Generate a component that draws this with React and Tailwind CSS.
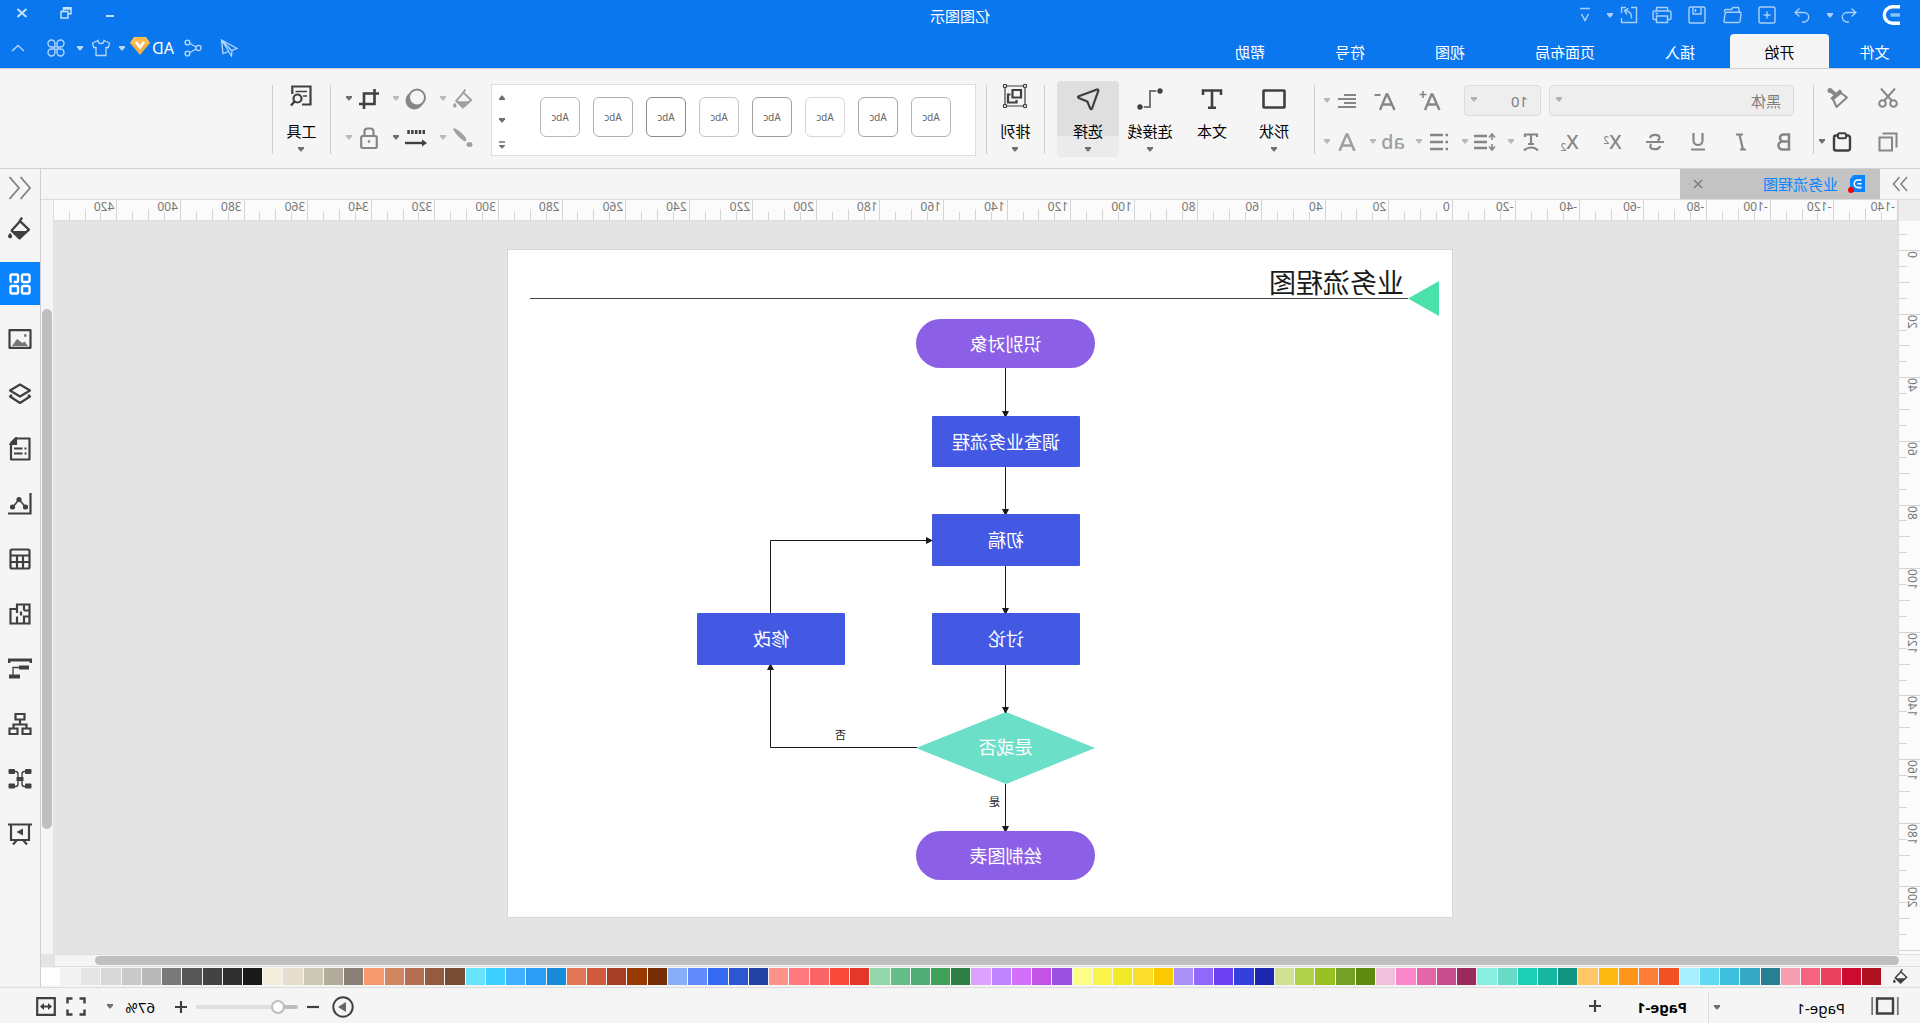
import React from "react";

const PALETTE = [
  "#b0111e", "#cb0b32", "#e8425f", "#f56381", "#f79db0",
  "#267f93", "#38a9c4", "#3fc0df", "#5fdaf1", "#a6f0ff",
  "#f25123", "#ff7e38", "#ff9519", "#ffb913", "#ffc765",
  "#139583", "#17b6a1", "#1bceb4", "#69dcc8", "#87efdd",
  "#9a2b5c", "#c64d8e", "#e367a8", "#fa87c9", "#f0c1da",
  "#5e8a12", "#77a028", "#98c024", "#b2d24c", "#d1e193",
  "#1e27af", "#3440dc", "#6c40f3", "#8f6af8", "#aa91f6",
  "#fbc900", "#fbdd2e", "#f0ea27", "#f9f54a", "#fcfe86",
  "#9a50e0", "#c452e7", "#d46ffb", "#c083ff", "#dca2ff",
  "#2f8044", "#3fa258", "#52ae76", "#65be87", "#92d7ab",
  "#e53729", "#fb4a3b", "#f96466", "#ff7a7d", "#ff9288",
  "#2441a4", "#2d57d2", "#336af1", "#628bfe", "#88aef7",
  "#752e03", "#963a00", "#a53e24", "#d05a3c", "#e27555",
  "#198ad8", "#2d9cf4", "#43b0ff", "#3dd0ff", "#68e3ff",
  "#764c32", "#925b42", "#b27050", "#d38660", "#f6996d",
  "#8a7f75", "#b1ac9c", "#cdc9b8", "#e5ddce", "#f4eddb",
  "#191919", "#2f2f2f", "#434343", "#575757", "#797979",
  "#b9b9b9", "#c9c9c9", "#d8d8d8", "#e5e5e5", "#f2f2f2", "#ffffff",
];

const H_LABELS = Array.from({ length: 29 }, (_, i) => i * 20 - 140);
const V_LABELS = Array.from({ length: 11 }, (_, i) => i * 20);

function Svg({ w = 22, h = w, sw = 2, children, className = "" }) {
  return (
    <svg
      width={w}
      height={h}
      viewBox={`0 0 ${w} ${h}`}
      fill="none"
      stroke="currentColor"
      strokeWidth={sw}
      className={`shrink-0 ${className}`}
      aria-hidden="true"
    >
      {children}
    </svg>
  );
}

function Caret({ className = "" }) {
  return (
    <svg width="8" height="5" viewBox="0 0 8 5" fill="currentColor" className={`shrink-0 ${className}`} aria-hidden="true">
      <path d="M1 0h6v1.5L4.5 4.5h-1L1 1.5z" />
    </svg>
  );
}

function Btn({ label, className = "", children }) {
  return (
    <button type="button" aria-label={label} className={`flex shrink-0 items-center justify-center ${className}`}>
      {children}
    </button>
  );
}

function Split({ label, tone = "text-[#868686]", caret = "text-[#b9b9b9]", children }) {
  return (
    <button type="button" aria-label={label} className={`flex w-9 shrink-0 items-center gap-1 ${tone}`}>
      <span className="flex w-6 items-center justify-center">{children}</span>
      <Caret className={caret} />
    </button>
  );
}

function Rule() {
  return <div className="mt-1 h-[69px] w-px shrink-0 self-start bg-[#cfcfcf]" />;
}

function TitleBar() {
  return (
    <div className="grid h-[34px] grid-cols-[1fr_auto_1fr] pb-1">
      <div className="flex items-center pl-5 text-[#a9d0fb]">
        <svg width="18" height="20" viewBox="0 0 18 20" fill="none" aria-hidden="true">
          <path d="M0 1.800h7.500a8.200 8.200 0 0 1 0 16.400H0" stroke="#fff" strokeWidth="3.400" />
          <path d="M0 10h9.500" stroke="#8fc1f8" strokeWidth="3.400" />
        </svg>
        <Btn label="撤销" className="ml-[17px] w-[31px]">
          <Svg w={16} sw={1.4}>
            <path d="M5.500 1.500L1 5.500l4.500 4M1 5.500h9a4.700 4.700 0 0 1 0 9.500H8" />
          </Svg>
        </Btn>
        <Caret />
        <Btn label="恢复" className="ml-1.5 w-[35px]">
          <Svg w={16} sw={1.4}>
            <path d="M10.500 1.500l4.500 4-4.500 4M15 5.500H6A4.700 4.700 0 0 0 6 15h2" />
          </Svg>
        </Btn>
        <Btn label="新建" className="w-[35px]">
          <Svg w={18} sw={1.4}>
            <rect x="1" y="1" width="16" height="16" rx="1.500" />
            <path d="M9 5.500v7M5.500 9h7" />
          </Svg>
        </Btn>
        <Btn label="打开" className="w-[35px]">
          <Svg w={20} h={18} sw={1.4}>
            <path d="M2.500 6.500l1-5h5.500l1.500 2h5.500q1.500 0 1.500 1.500v1.500M1 7q0-.8 1-.8h13q1.500 0 1.800 1.500l1.200 7q.2 1.800-1.500 1.800H3.500q-1.500 0-1.700-1.500z" />
          </Svg>
        </Btn>
        <Btn label="保存" className="w-[35px]">
          <Svg w={18} sw={1.4}>
            <rect x="1" y="1" width="16" height="16" rx="1.500" />
            <path d="M5 1v7h8V1M10.500 3v3" />
          </Svg>
        </Btn>
        <Btn label="打印" className="w-[35px]">
          <Svg w={20} h={18} sw={1.4}>
            <path d="M4.500 5V1.500h11V5M4.500 13.500H2.500q-1.500 0-1.500-1.500V6.500q0-1.500 1.500-1.500h15q1.500 0 1.500 1.500V12q0 1.500-1.500 1.500h-2M4.500 10h11v6.500h-11z" />
            <path d="M14 7.500h2.500" />
          </Svg>
        </Btn>
        <Btn label="导出" className="w-[31px]">
          <Svg w={18} sw={1.4}>
            <path d="M7 1.500H1.500v15h15V12M16.500 7V1.500H12M6.500 12.500C6 8 8 5 13 4.500M9.500 2.500l4 2-2.500 4" />
          </Svg>
        </Btn>
        <Caret />
        <Btn label="自定义快速访问" className="ml-[13px] w-4">
          <Svg w={12} h={16} sw={1.5}>
            <path d="M1 1.500h10M2.500 7L6 13.500 9.500 7" />
          </Svg>
        </Btn>
      </div>
      <h1 className="flex items-center pt-0.5 text-[15px] leading-5 text-white">亿图图示</h1>
      <div className="flex justify-end pb-1 text-[#c7e0fc]">
        <Btn label="最小化" className="w-11">
          <Svg w={12} sw={2}><path d="M2 9h8" /></Svg>
        </Btn>
        <Btn label="还原" className="w-11">
          <Svg w={12} sw={1.5}><path d="M1 .8h7.500v6H1zM1 2h7.500" /><path d="M4 4.500h7v6.500H4z" fill="#0a77ee" /></Svg>
        </Btn>
        <Btn label="关闭" className="w-11">
          <Svg w={12} sw={2}><path d="M1.500 2l9 8M10.500 2l-9 8" /></Svg>
        </Btn>
      </div>
    </div>
  );
}

const TABS = ["插入", "页面布局", "视图", "符号", "帮助"];

function TabBar() {
  return (
    <div className="flex h-[34px] items-stretch justify-between text-[15px] leading-5 text-white">
      <nav className="flex" aria-label="功能区">
        <button type="button" className="w-[91px] pt-0.5">文件</button>
        <button type="button" className="w-[99px] rounded-t-sm bg-[#f5f5f5] pt-0.5 text-black">开始</button>
        {TABS.map((t) => (
          <button type="button" key={t} className="px-[35px] pt-0.5">{t}</button>
        ))}
      </nav>
      <div className="flex items-center pb-1.5 text-[#b5d6fb]">
        <Btn label="发送" className="w-9">
          <Svg w={18} sw={1.3}>
            <path d="M16.500 1L1 9.500l5 2 .5 5.500 3-4.500 5.500 2zM16.500 1L6.500 11.500M16.500 1L9 12.500" />
          </Svg>
        </Btn>
        <Btn label="分享" className="w-9">
          <Svg w={18} sw={1.4}>
            <circle cx="3.500" cy="9" r="2.600" /><circle cx="14.500" cy="3.500" r="2.400" /><circle cx="14.500" cy="14.500" r="2.400" />
            <path d="M6 8l6-3.500M6 10l6 3.500" />
          </Svg>
        </Btn>
        <button type="button" className="ml-px flex items-center gap-0.5 text-base leading-5 text-white">
          AD
          <svg width="20" height="18" viewBox="0 0 20 18" aria-hidden="true" className="mb-1">
            <path d="M4 0h12l4 6-10 12L0 6z" fill="#f3b043" />
            <path d="M4 0h12l4 6-10 2L0 6z" fill="#fdc052" opacity=".7" />
            <path d="M6 5l4 5.500L14 5" fill="none" stroke="#fff" strokeWidth="2.600" />
          </svg>
        </button>
        <Caret className="ml-1" />
        <Btn label="皮肤" className="w-[34px]">
          <Svg w={20} h={18} sw={1.3}>
            <path d="M7 1.500L1.500 4l1.200 4.500H5V16.500h10V8.500h2.300L18.500 4 13 1.500a3 3 0 0 1-6 0z" />
          </Svg>
        </Btn>
        <Caret />
        <Btn label="更多" className="w-10">
          <Svg w={18} sw={1.4}>
            <path d="M8 4.500V8H4.500A3.500 3.500 0 1 1 8 4.500zM10 4.500V8h3.500A3.500 3.500 0 1 0 10 4.500zM8 13.500V10H4.500A3.500 3.500 0 1 0 8 13.500zM10 13.500V10h3.500a3.500 3.500 0 1 1-3.500 3.500z" />
          </Svg>
        </Btn>
        <Btn label="收起" className="w-9">
          <Svg w={14} h={8} sw={1.4}><path d="M1 7l6-5.500L13 7" /></Svg>
        </Btn>
      </div>
    </div>
  );
}

function Bucket({ w = 22 }) {
  return (
    <svg width={w} height={w} viewBox="0 0 22 22" fill="none" stroke="currentColor" strokeWidth="2.200" aria-hidden="true" className="shrink-0">
      <path d="M8.500 0.500l3 4.500M10.500 4l8 9-7.500 7.500L2 12z" strokeLinejoin="round" />
      <path d="M2.500 13.500h16L11 21z" fill="currentColor" stroke="none" />
      <path d="M20 15c1.300 1.700 2 2.500 2 3.500a2 2 0 0 1-4 0c0-1 .7-1.800 2-3.500z" fill="currentColor" stroke="none" />
    </svg>
  );
}

function Select({ label, value, className }) {
  return (
    <div className={`relative flex h-[31px] shrink-0 text-[#7f7f7f] ${className}`}>
      <select aria-label={label} className="w-full appearance-none rounded-sm border border-[#dcdcdc] bg-[#eee] pl-3 text-[15px] leading-6">
        <option>{value}</option>
      </select>
      <Caret className="pointer-events-none absolute top-3 right-1.5 text-[#b0b0b0]" />
    </div>
  );
}

function BigBtn({ label, caret = true, active = false, iconAlign = "items-center", className = "w-[62px]", children }) {
  return (
    <button
      type="button"
      className={`flex h-[76px] shrink-0 flex-col items-center text-[15px] leading-5 text-black ${className} ${
        active ? "rounded-sm bg-linear-to-b from-[#dfdfdf] from-72% to-[#ebebeb] to-72%" : ""
      }`}
    >
      <span className={`flex h-9 text-[#404040] ${iconAlign}`}>{children}</span>
      <span className="mt-1">{label}</span>
      {caret && <Caret className="mt-1.5 text-[#707070]" />}
    </button>
  );
}

const STYLE_BORDERS = [
  "border-[#b4b4b4]", "border-[#a8a8a8]", "border-[#d6d6d6]", "border-[#a0a0a0]",
  "border-[#c4c4c4]", "border-[#8c8c8c]", "border-[#b0b0b0]", "border-[#b8b8b8]",
];

function Ribbon() {
  return (
    <div className="flex h-[101px] items-start border-t border-b border-[#d2d2d2] bg-[#f5f5f5] pt-3 text-[#868686]">
      <div className="ml-[17px] flex w-[89px] shrink-0 flex-col gap-[11px] pt-1">
        <div className="flex h-[31px] items-center gap-5 pb-1.5">
          <Btn label="剪切" className="w-[30px]">
            <Svg w={20} h={20} sw={2}>
              <circle cx="4.500" cy="15.500" r="3.300" /><circle cx="15.500" cy="15.500" r="3.300" />
              <path d="M3 0.500L14 13M17 .5L6 13" />
            </Svg>
          </Btn>
          <Btn label="格式刷" className="w-[30px]">
            <Svg w={22} sw={2}>
              <circle cx="19" cy="3.500" r="2.500" fill="currentColor" stroke="none" />
              <path d="M18 4l-4 3" strokeWidth="4" />
              <path d="M8 3.500l9.500 9" strokeWidth="3.600" />
              <path d="M8 6L2 10.500l10.500 9.500L16 12z" strokeLinejoin="round" />
            </Svg>
          </Btn>
        </div>
        <div className="flex h-[31px] items-center pb-0.5">
          <Btn label="复制" className="w-[30px]">
            <Svg w={20}>
              <path d="M6 5.500h12.500v13H6zM1.500 15.500v-14H15.500" />
            </Svg>
          </Btn>
          <Btn label="粘贴" className="ml-4 w-[30px] text-[#404040]">
            <Svg w={20} sw={2.4}>
              <rect x="2" y="3.500" width="16" height="15" rx="2" />
              <rect x="6" y="1.200" width="8" height="5" rx="1.500" fill="#f5f5f5" strokeWidth="2" />
            </Svg>
          </Btn>
          <Caret className="ml-px text-[#707070]" />
        </div>
      </div>
      <Rule />
      <div className="flex w-[498px] shrink-0 flex-col gap-[10px] pt-1">
        <div className="flex h-[31px] items-center pl-[19px]">
          <Select label="字体" value="黑体" className="w-[245px]" />
          <Select label="字号" value="10" className="ml-2 w-[77px]" />
          <Btn label="增大字号" className="ml-[11px] w-[45px]">
            <Svg w={22} h={20} sw={2.4}>
              <path d="M1.500 19L8.500 3.500h1L16 19M4 13.500h10" /><path d="M18 0v7M14.500 3.500h7" strokeWidth="1.600" />
            </Svg>
          </Btn>
          <Btn label="减小字号" className="w-[45px]">
            <Svg w={22} h={20} sw={2.4}>
              <path d="M1.500 19L8.500 3.500h1L16 19M4 13.500h10" /><path d="M15.500 4h6" strokeWidth="2" />
            </Svg>
          </Btn>
          <span className="ml-1">
            <Split label="对齐">
              <Svg w={18} h={16} sw={2.2}>
                <path d="M0 2h12M0 6h18M0 10h12M0 14h18" />
              </Svg>
            </Split>
          </span>
        </div>
        <div className="flex h-[31px] items-center pl-[7px]">
          <Btn label="粗体" className="w-[43px]">
            <Svg w={14} h={18} sw={2.6}>
              <path d="M2 1.500h5.500a3.500 3.500 0 0 1 0 7H2zM2 8.500h6.500a4 4 0 0 1 0 8H2z" />
            </Svg>
          </Btn>
          <Btn label="斜体" className="w-[43px]">
            <Svg w={14} h={18} sw={2.2}><path d="M5 1.500h7M2 16.500h6M8.500 1.500L5 16.500" /></Svg>
          </Btn>
          <Btn label="下划线" className="w-[43px]">
            <Svg w={16} h={18} sw={2.2}><path d="M3.500 0v7.500a4.500 4.500 0 0 0 9 0V0M1 16.500h14" /></Svg>
          </Btn>
          <Btn label="删除线" className="w-[43px]">
            <Svg w={18} h={18} sw={2.2}>
              <path d="M14 5c-.5-2-2.500-3.200-5-3.200S4.500 3 4.500 5c0 1.200.8 2 2 2.500M0 9h18M12.500 11.200c.8.500 1.200 1.200 1.200 2 0 2-2 3-4.700 3S4.300 15 4 13" />
            </Svg>
          </Btn>
          <Btn label="上标" className="w-[43px] font-medium">
            <span className="text-[20px] leading-5">X<sup className="text-[10px]">2</sup></span>
          </Btn>
          <Btn label="下标" className="w-[43px] font-medium">
            <span className="text-[20px] leading-5">X<sub className="text-[10px]">2</sub></span>
          </Btn>
          <div className="ml-[5px] flex gap-[10px]">
            <Split label="文字方向">
              <Svg w={18} h={18} sw={2.2}>
                <path d="M3 4V1.500h12V4M9 1.500V11M6 11h6M2 17.500c3.500-4 10.500-4 14 0" />
              </Svg>
            </Split>
            <Split label="行距">
              <Svg w={22} h={18} sw={2}>
                <path d="M9 3h13M9 9h13M9 15h13" strokeWidth="2.400" /><path d="M4 1v6M4 11v6M1 4.500L4 1l3 3.500M1 13.500L4 17l3-3.500" strokeWidth="1.600" />
              </Svg>
            </Split>
            <Split label="项目符号">
              <Svg w={18} h={18} sw={2.4}><path d="M0 2h2.500M0 9h2.500M0 16h2.500M5 2h13M5 9h13M5 16h13" /></Svg>
            </Split>
            <Split label="突出显示" tone="text-[#a0a0a0]">
              <span className="text-[20px] leading-5 font-medium">ab</span>
            </Split>
            <Split label="字体颜色" tone="text-[#a0a0a0]">
              <Svg w={18} h={18} sw={2.6}><path d="M1.500 18L8.500 1.500h1L16.500 18M4 12.500h10" /></Svg>
            </Split>
          </div>
        </div>
      </div>
      <Rule />
      <div className="flex shrink-0 pr-3 pl-[9px]">
        <BigBtn label="形状">
          <Svg w={24} h={20} sw={2.6}><rect x="1.500" y="1.500" width="21" height="17" rx="0.500" /></Svg>
        </BigBtn>
        <BigBtn label="文本" caret={false}>
          <Svg w={22} h={20} sw={2.6}><path d="M2 6V1.500h18V6M11 1.500V19M7 18.800h8" /></Svg>
        </BigBtn>
        <BigBtn label="连接线">
          <Svg w={26} h={22} sw={2}>
            <path d="M3 3h10V19H23" stroke="#777" />
            <circle cx="3" cy="3" r="2.700" fill="currentColor" stroke="none" />
            <circle cx="23" cy="19" r="2.700" fill="currentColor" stroke="none" />
            <path d="M6.200 1v4M19.800 17v4" stroke="#f5f5f5" strokeWidth="1" />
          </Svg>
        </BigBtn>
        <BigBtn label="选择" active>
          <Svg w={24} h={24} sw={2.2}>
            <path d="M3 2.500c-.9-.3-1.600.4-1.300 1.300L8 21.500c.4 1 1.300 1 1.700.1l3-7.100 8.600-3.600c1-.4.900-1.200 0-1.600z" strokeLinejoin="round" />
          </Svg>
        </BigBtn>
      </div>
      <Rule />
      <BigBtn label="排列" className="w-[57px]" iconAlign="items-start pt-0.5">
        <Svg w={26} h={26} sw={2.2}>
          <path d="M3 3h20v20H3z" strokeWidth="1.200" />
          <path d="M7 7h8.500v7.500H7z" /><path d="M17.500 11.500H20v8h-8.500V17" />
          <g fill="#f5f5f5" strokeWidth="1.200">
            <circle cx="3" cy="3" r="1.700" /><circle cx="23" cy="3" r="1.700" /><circle cx="3" cy="23" r="1.700" /><circle cx="23" cy="23" r="1.700" />
          </g>
        </Svg>
      </BigBtn>
      <Rule />
      <div className="mt-[3px] ml-[10px] flex h-[72px] w-[485px] shrink-0 justify-between border border-[#dedede] bg-white pl-6">
        <div className="flex gap-[13px] pt-3">
          {STYLE_BORDERS.map((b, i) => (
            <button type="button" key={i} className={`size-10 rounded-md border bg-white text-[10px] leading-4 text-[#666] ${b}`}>
              Abc
            </button>
          ))}
        </div>
        <div className="flex w-[21px] flex-col items-center justify-between pt-2.5 pb-1.5 text-[#707070]">
          <Btn label="上一行"><Caret className="rotate-180" /></Btn>
          <Btn label="下一行"><Caret /></Btn>
          <Btn label="展开"><Svg w={8} h={8} sw={1.5}><path d="M1 1h6" /><path d="M1 4h6v.5L4.500 7.500h-1L1 4.500z" fill="currentColor" stroke="none" /></Svg></Btn>
        </div>
      </div>
      <div className="ml-4 flex shrink-0 flex-col gap-[9px] pt-0.5 pr-[14px]">
        <div className="flex h-[31px] items-center gap-[11px]">
          <Split label="填充" tone="text-[#a0a0a0]"><Bucket w={20} /></Split>
          <Split label="阴影">
            <Svg w={22} sw={2}>
              <circle cx="12.500" cy="12.500" r="9" fill="currentColor" stroke="none" />
              <circle cx="10" cy="9.500" r="8" fill="#f5f5f5" />
            </Svg>
          </Split>
          <Split label="裁剪" tone="text-[#404040]" caret="text-[#707070]">
            <Svg w={20} sw={2.6}><path d="M4.500 0v15H20M0 4.500h15V20" /></Svg>
          </Split>
        </div>
        <div className="flex h-[31px] items-center gap-[11px] pb-0.5">
          <Split label="线条" tone="text-[#a0a0a0]">
            <Svg w={20} sw={1}>
              <path d="M19.500.5c1 1-1.500 4.500-4.500 7.500s-6.500 6-7.800 5.200S7 9.500 10 6.500 18.500-.5 19.500.5z" fill="currentColor" stroke="none" />
              <ellipse cx="3.500" cy="16.500" rx="3" ry="2.500" fill="currentColor" stroke="none" />
            </Svg>
          </Split>
          <Split label="线型" tone="text-[#404040]" caret="text-[#707070]">
            <Svg w={22} h={18}><path d="M2 3h18" strokeWidth="4" strokeDasharray="2.500 1.300" /><path d="M5 14h17" strokeWidth="2.400" /><path d="M5 10.500v7L0 14z" fill="currentColor" stroke="none" /></Svg>
          </Split>
          <Split label="锁定">
            <Svg w={18} h={22} sw={2.2}>
              <rect x="1.200" y="9" width="15.600" height="12" rx="1.500" /><path d="M4.500 9V4.500a3 3 0 0 1 3-3h3a3 3 0 0 1 3 3V9" /><circle cx="9" cy="14.500" r="1.300" fill="currentColor" stroke="none" />
            </Svg>
          </Split>
        </div>
      </div>
      <Rule />
      <BigBtn label="工具" className="w-[57px]" iconAlign="items-start pt-1">
        <Svg w={22} h={22} sw={2.4}>
          <path d="M10 19.500H1.500v-18h18.200V9" strokeWidth="2.200" /><path d="M5 6.500h11.500M5 11h4" strokeWidth="1.600" />
          <circle cx="14.500" cy="13.500" r="4" strokeWidth="2.200" /><path d="M17.500 16.500l3.500 4" />
        </Svg>
      </BigBtn>
      <Rule />
    </div>
  );
}

function DocTabs() {
  return (
    <div className="flex h-[31px] items-stretch border-b border-[#dcdcdc] bg-[#f5f5f5]">
      <Btn label="展开符号库" className="w-10 text-[#808080]">
        <Svg w={16} h={16} sw={1.5}><path d="M1 1l6 7-6 7M8.500 1l6 7-6 7" /></Svg>
      </Btn>
      <div className="flex w-[200px] items-center bg-[#c3c3c3] pl-[14px]">
        <svg width="20" height="18" viewBox="0 0 20 18" aria-hidden="true">
          <path d="M1 0h11.500L16 4v13H1z" fill="#0a84ff" />
          <path d="M4.500 5H8a3.800 3.800 0 0 1 0 7.600H4.500M4.500 8.800H8.500" fill="none" stroke="#fff" strokeWidth="1.600" />
          <circle cx="15" cy="15" r="3" fill="#f00" />
        </svg>
        <span className="ml-2 grow text-[15px] leading-5 text-[#0a84ff]">业务流程图</span>
        <Btn label="关闭标签" className="w-9 text-[#777]">
          <Svg w={10} h={10} sw={1.4}><path d="M1 1l8 8M9 1L1 9" /></Svg>
        </Btn>
      </div>
    </div>
  );
}

function HRuler() {
  return (
    <div className="flex h-[21px] pr-3">
      <div className="w-[22px] shrink-0 border-r border-[#dcdcdc] bg-[#ededed]" />
      <div className="flex min-w-0 grow border-r border-b border-[#dcdcdc] bg-[#fbfbfb] text-xs leading-[14px] text-[#777]">
        {H_LABELS.map((n) => (
          <div key={n} className="relative flex min-w-0 flex-1 items-end border-l border-[#d4d4d4]">
            <span className="absolute top-0 left-0.5">{n}</span>
            <i className="flex-1" />
            <i className="h-[8px] flex-1 border-l border-[#d4d4d4]" />
            <i className="h-[11px] flex-1 border-l border-[#d4d4d4]" />
            <i className="h-[8px] flex-1 border-l border-[#d4d4d4]" />
          </div>
        ))}
      </div>
    </div>
  );
}

function VRuler() {
  return (
    <div className="flex w-[22px] shrink-0 flex-col border-r border-[#dcdcdc] bg-[#fbfbfb] text-xs leading-4 text-[#777]">
      <div className="flex h-[29px] flex-col items-end pt-[13px]">
        <i className="w-[8px] border-t border-[#d4d4d4]" />
      </div>
      {V_LABELS.map((n) => (
        <div key={n} className="relative flex flex-1 flex-col items-end border-t border-[#d4d4d4]">
          <span className="absolute top-0 left-0 rotate-180 [writing-mode:vertical-rl]">{n}</span>
          <i className="flex-1" />
          <i className="w-[8px] flex-1 border-t border-[#d4d4d4]" />
          <i className="w-[11px] flex-1 border-t border-[#d4d4d4]" />
          <i className="w-[8px] flex-1 border-t border-[#d4d4d4]" />
        </div>
      ))}
      <div className="h-[4px] border-t border-[#d4d4d4]" />
    </div>
  );
}

function Node({ className, children }) {
  return (
    <div className={`absolute flex items-center justify-center text-[18px] leading-6 text-white ${className}`}>{children}</div>
  );
}

function Drawing() {
  return (
    <div className="relative mt-[28px] ml-[445px] h-[669px] w-[946px] border border-[#d6d6d6] bg-white">
      <svg className="absolute inset-0" width="944" height="667" viewBox="0 0 944 667" fill="none" aria-hidden="true">
        <path d="M13 31v35l31-17.500z" fill="#4be1ab" />
        <path d="M44 48.500h878" stroke="#444" />
        <path d="M446 534l90-36-90-36-89 36z" fill="#6bdfc7" />
        <g stroke="#1a1a1a">
          <path d="M446.500 118v48M446.500 217v47M446.500 316v47M446.500 415v47M446.500 534v47" />
          <path d="M535 497.500h146.500V416M681.500 363v-72.500H521" />
        </g>
        <g fill="#1a1a1a">
          <path d="M443 161h7l-3 6h-1zM443 259h7l-3 6h-1zM443 358h7l-3 6h-1zM443 457h7l-3 6h-1zM443 576h7l-3 6h-1z" />
          <path d="M678 420h7l-3-6h-1zM526 287v7l-6-3v-1z" />
        </g>
      </svg>
      <h2 className="absolute top-[15px] left-12 text-[27px] leading-9 text-[#1a1a1a]">业务流程图</h2>
      <Node className="top-[69px] left-[357px] h-[49px] w-[179px] rounded-full bg-[#8c60e6]">识别对象</Node>
      <Node className="top-[166px] left-[372px] h-[51px] w-[148px] rounded-[1px] bg-[#4359e4]">调查业务流程</Node>
      <Node className="top-[264px] left-[372px] h-[52px] w-[148px] rounded-[1px] bg-[#4359e4]">初稿</Node>
      <Node className="top-[363px] left-[372px] h-[52px] w-[148px] rounded-[1px] bg-[#4359e4]">讨论</Node>
      <Node className="top-[363px] left-[607px] h-[52px] w-[148px] rounded-[1px] bg-[#4359e4]">修改</Node>
      <Node className="top-[461px] left-[357px] h-[72px] w-[179px]">是或否</Node>
      <Node className="top-[581px] left-[357px] h-[49px] w-[179px] rounded-full bg-[#8c60e6]">绘制图表</Node>
      <span className="absolute top-[477px] left-[606px] text-[11px] leading-4 text-[#1a1a1a]">否</span>
      <span className="absolute top-[544px] left-[452px] text-[11px] leading-4 text-[#1a1a1a]">是</span>
    </div>
  );
}

const TOOLS = [
  ["填充", <Bucket key="i" w={23} />],
  ["符号库", (
    <Svg key="i" w={22} sw={2.4}>
      <rect x="1.500" y="1.500" width="7.500" height="7.500" rx="1.500" /><rect x="13" y="1.500" width="7.500" height="7.500" rx="1.500" strokeDasharray="13 2" />
      <rect x="1.500" y="13" width="7.500" height="7.500" rx="1.500" /><rect x="13" y="13" width="7.500" height="7.500" rx="1.500" />
    </Svg>
  )],
  ["图片", (
    <Svg key="i" w={24} h={20} sw={2.2}>
      <path d="M1.500 1.200h21v17.600h-21z" strokeLinejoin="round" /><path d="M4 17l3.500-4.500 2 1.500L15 10l5 7z" fill="#777" stroke="none" /><path d="M5.500 6.500H8" strokeWidth="2.500" stroke="#777" />
    </Svg>
  )],
  ["图层", (
    <Svg key="i" w={24} h={22} sw={2.2}>
      <path d="M12 1.500l10 6-10 6-10-6z" strokeLinejoin="round" /><path d="M4 12l-2 1.500 10 6.500 10-6.500-2-1.500" strokeLinejoin="round" />
    </Svg>
  )],
  ["注释", (
    <Svg key="i" w={22} h={24} sw={2.2}>
      <path d="M1.500 1.500h14l4.500 4.500V22.500h-18.500z" strokeLinejoin="round" /><path d="M15 1.500V7h5z" fill="currentColor" />
      <path d="M4.500 11.500h2M8.500 11.500H17M4.500 16.500h2M8.500 16.500H17" strokeWidth="2" />
    </Svg>
  )],
  ["图表", (
    <Svg key="i" w={24} h={22} sw={2.2}>
      <path d="M1.500 0v20.500H24" /><path d="M6 14.500l7-8 6.500 8" strokeWidth="1.500" />
      <g fill="currentColor" stroke="none"><circle cx="6.500" cy="14" r="2.600" /><circle cx="13" cy="6.500" r="2.600" /><circle cx="19.500" cy="14" r="2.600" /></g>
    </Svg>
  )],
  ["表格", (
    <Svg key="i" w={22} h={22} sw={2.2}>
      <rect x="1.500" y="1.500" width="19" height="19" rx="1.500" /><path d="M1.500 7.500h19M1.500 14h19M8 7.500v13M14 7.500v13" />
    </Svg>
  )],
  ["平面图", (
    <Svg key="i" w={22} h={22} sw={2.2}>
      <path d="M1.500 1.500H14v4.500h6.500v14.500h-19zM1.500 7.500h5.500M7 1.500v6M1.500 13.500H7v7M14 6v4M14 13.500v7M10 8.500v4" />
    </Svg>
  )],
  ["甘特图", (
    <Svg key="i" w={24} h={22}>
      <path d="M1 5V2h22v3" strokeWidth="2.800" /><path d="M3 9.500h10M12 18.500h11" strokeWidth="3.800" /><path d="M13 9.500h6v9" strokeWidth="1.300" />
    </Svg>
  )],
  ["组织架构图", (
    <Svg key="i" w={24} h={24} sw={2.2}>
      <path d="M7.500 2h9v5.500h-9zM1.500 16.500h8v5.500h-8zM14.500 16.500h8v5.500h-8zM12 7.500V12M5.500 15.500V12.500h13v3" />
    </Svg>
  )],
  ["思维导图", (
    <Svg key="i" w={24} h={20} sw={1.4}>
      <path d="M6 2.500h1.500q2.500 0 2.500 2.500v10q0 2.500-2.500 2.500H6M18 2.500h-1.500Q14 2.500 14 5v10q0 2.500 2.500 2.500H18" />
      <g fill="currentColor" stroke="none"><rect x="0.500" y="0" width="6.500" height="5" rx="1" /><rect x="17" y="0" width="6.500" height="5" rx="1" /><rect x="0.500" y="14.500" width="6.500" height="5" rx="1" /><rect x="17" y="14.500" width="6.500" height="5" rx="1" /><rect x="8.500" y="8" width="7" height="4" /></g>
    </Svg>
  )],
  ["演示", (
    <Svg key="i" w={24} h={22} sw={2.2}>
      <path d="M0 1.500h24M3 1.500v15.500h18V1.500M9 17l-4 4.500M15 17l4 4.500" /><path d="M9 5.500v7l6.500-3.500z" fill="currentColor" stroke="none" />
    </Svg>
  )],
];

function Sidebar() {
  return (
    <aside className="flex w-[41px] shrink-0 flex-col border-l border-[#cfcfcf] bg-[#f5f5f5] text-[#404040]">
      <Btn label="展开面板" className="h-[38px] w-10 text-[#808080]">
        <Svg w={24} h={24} sw={1.8}><path d="M11.500 1L2 12l9.500 11M22.500 1L13 12l9.500 11" /></Svg>
      </Btn>
      <div className="flex flex-col gap-3">
        {TOOLS.map(([name, icon], i) => (
          <Btn key={name} label={name} className={i === 1 ? "h-[43px] w-10 bg-[#0a84ff] text-white" : "h-[43px] w-10"}>
            {icon}
          </Btn>
        ))}
      </div>
    </aside>
  );
}

function Palette() {
  return (
    <div className="flex h-5 items-center pt-px pb-0.5">
      <span className="flex w-[39px] shrink-0 justify-center text-[#404040]"><Bucket w={15} /></span>
      <div className="flex h-[17px] grow gap-px">
        {PALETTE.map((c) => (
          <button type="button" key={c} aria-label={c} className="min-w-0 flex-1" style={{ backgroundColor: c }} />
        ))}
      </div>
    </div>
  );
}

function StatusBar() {
  return (
    <footer className="flex h-9 items-center justify-between border-t border-[#dcdcdc] bg-[#f5f5f5] text-[#404040]">
      <div className="flex items-center self-stretch text-[15px] leading-5 text-black">
        <Btn label="页面视图" className="ml-[21px] w-7 text-[#404040]">
          <Svg w={28} h={18}><path d="M6 1.500h16v15H6z" strokeWidth="2.400" /><path d="M1.200 0v18M26.800 0v18" stroke="#777" strokeWidth="1.800" /></Svg>
        </Btn>
        <button type="button" className="ml-[26px] flex w-[136px] items-center justify-between pt-1">
          Page-1
          <Caret className="mr-1 text-[#707070]" />
        </button>
        <div className="h-[30px] w-px self-end bg-[#dcdcdc]" />
        <button type="button" className="ml-[21px] pt-0.5 font-bold">Page-1</button>
        <Btn label="添加页面" className="ml-9 w-3 text-[#404040]">
          <Svg w={12}><path d="M6 0v12M0 6h12" strokeWidth="2.200" /></Svg>
        </Btn>
      </div>
      <div className="flex items-center pt-0.5 pr-9">
        <Btn label="播放" className="w-[22px]">
          <Svg w={22} sw={2}><circle cx="11" cy="11" r="9.700" /><path d="M8 6v10l8-5z" fill="#666" stroke="none" /></Svg>
        </Btn>
        <Btn label="缩小" className="ml-[13px] w-3"><Svg w={12} sw={2.2}><path d="M0 6h12" /></Svg></Btn>
        <input
          type="range"
          aria-label="缩放"
          min="0"
          max="100"
          defaultValue="15"
          className="mx-[9px] h-1 w-[102px] appearance-none rounded-full bg-linear-to-r from-[#bdbdbd] from-20% to-[#dedede] to-20% [&::-webkit-slider-thumb]:size-[14px] [&::-webkit-slider-thumb]:appearance-none [&::-webkit-slider-thumb]:rounded-full [&::-webkit-slider-thumb]:border-2 [&::-webkit-slider-thumb]:border-[#bdbdbd] [&::-webkit-slider-thumb]:bg-white"
        />
        <Btn label="放大" className="w-3"><Svg w={12} sw={2.2}><path d="M6 0v12M0 6h12" /></Svg></Btn>
        <button type="button" className="ml-5 flex w-[49px] items-center justify-between text-[15px] leading-5 text-black">
          67%
          <Caret className="text-[#707070]" />
        </button>
        <Btn label="全屏" className="ml-5 w-5">
          <Svg w={20} h={19} sw={2.4}><path d="M1.500 6.500v-5h5M13.500 1.500h5v5M18.500 12.500v5h-5M6.500 17.500h-5v-5" /></Svg>
        </Btn>
        <Btn label="适合宽度" className="ml-[10px] w-5">
          <Svg w={20} h={19} sw={2}><path d="M1.200 1.200h17.600v16.600H1.200z" strokeWidth="2.200" /><path d="M5 9.500h10" /><path d="M8 6v7L4 9.500zM12 6v7l4-3.500z" fill="currentColor" stroke="none" /></Svg>
        </Btn>
      </div>
    </footer>
  );
}

export default function App() {
  return (
    <div className="flex min-h-screen -scale-x-100 flex-col overflow-hidden bg-[#f5f5f5] font-['Noto_Sans','Noto_Sans_CJK_SC',sans-serif]">
      <header className="bg-[#0a77ee]">
        <TitleBar />
        <TabBar />
      </header>
      <Ribbon />
      <div className="flex grow">
        <main className="flex min-w-0 grow flex-col">
          <DocTabs />
          <HRuler />
          <div className="flex grow">
            <VRuler />
            <div className="min-w-0 grow bg-[#e4e4e4]">
              <Drawing />
            </div>
            <div className="w-3 shrink-0 bg-[#f5f5f5] pt-[88px]">
              <div className="ml-px h-[520px] w-[10px] rounded-full bg-[#bfbfbf]" />
            </div>
          </div>
          <div className="flex h-[13px] bg-[#e4e4e4]">
            <div className="grow border-t border-b border-[#dcdcdc] bg-[#f5f5f5] pt-px pr-10 pl-[21px]">
              <div className="h-[9px] rounded-full bg-[#bfbfbf]" />
            </div>
            <div className="w-[14px] shrink-0" />
          </div>
          <Palette />
        </main>
        <Sidebar />
      </div>
      <StatusBar />
    </div>
  );
}
